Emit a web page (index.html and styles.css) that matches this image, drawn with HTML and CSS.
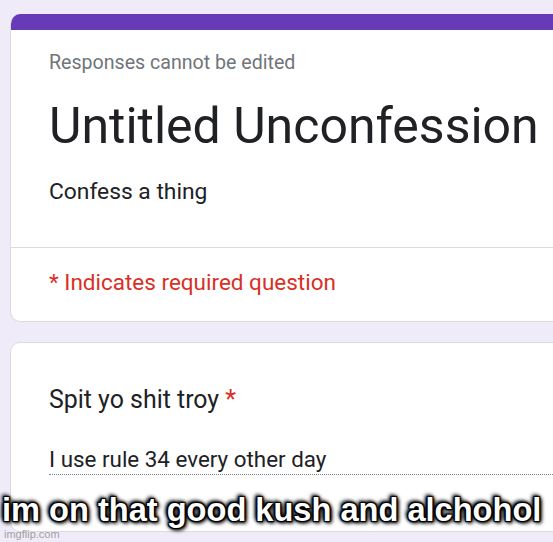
FILE: index.html
```html
<!DOCTYPE html>
<html>
<head>
<meta charset="utf-8">
<link rel="stylesheet" href="styles.css">
</head>
<body>
<div class="page">
  <div class="card head-card">
    <div class="bar"></div>
    <div class="head-body">
      <div class="note">Responses cannot be edited</div>
      <h1 class="title">Untitled Unconfession</h1>
      <div class="desc">Confess a thing</div>
    </div>
    <div class="req">* Indicates required question</div>
  </div>
  <div class="card q-card">
    <div class="q-title">Spit yo shit troy <span class="star">*</span></div>
    <div class="answer">I use rule 34 every other day</div>
  </div>
</div>
<div class="meme">im on that good kush and alchohol</div>
<div class="wm">imgflip.com</div>
</body>
</html>
```
FILE: styles.css
```css
html, body {
  margin: 0;
  padding: 0;
}
body {
  width: 553px;
  height: 542px;
  overflow: hidden;
  background: #f0ebf8;
  font-family: Roboto, "Noto Sans", sans-serif;
  position: relative;
}
.page {
  width: 553px;
  overflow: hidden;
  padding: 14px 0 0 10px;
  box-sizing: border-box;
  display: flex;
  flex-direction: column;
  gap: 20px;
}
.card {
  width: 640px;
  flex: none;
  background: #fff;
  border: 1px solid #dadce0;
  border-radius: 10px;
  box-sizing: border-box;
  overflow: hidden;
}
.head-card {
  border-top: none;
}
.bar {
  height: 16px;
  background: #673ab7;
}
.head-body {
  padding: 20px 0 0 38px;
  border-bottom: 1px solid #dadce0;
  height: 218px;
  box-sizing: border-box;
}
.note {
  font-size: 19.6px;
  color: #70757a;
  line-height: 26px;
}
.title {
  margin: 22px 0 0 0;
  font-weight: 400;
  font-size: 50px;
  line-height: 56px;
  color: #202124;
}
.desc {
  margin-top: 23px;
  font-size: 22.8px;
  line-height: 30px;
  color: #202124;
}
.req {
  padding: 19px 0 24px 38px;
  font-size: 22.5px;
  line-height: 30px;
  color: #d93025;
}
.q-card {
  height: 190px;
  padding: 41px 0 0 38px;
}
.q-title {
  font-size: 24.9px;
  line-height: 32px;
  color: #202124;
}
.star {
  color: #d93025;
}
.answer {
  margin-top: 28px;
  width: 560px;
  font-size: 22.4px;
  line-height: 30px;
  color: #202124;
  border-bottom: 1px dotted #80868b;
}
.meme {
  position: absolute;
  left: 2px;
  top: 490px;
  font-family: "Liberation Sans", Arial, sans-serif;
  font-weight: 700;
  font-size: 32.6px;
  line-height: 40px;
  color: #fff;
  white-space: nowrap;
  text-shadow: 1px 1px 1px #000, -1px -1px 1px #000, 1px -1px 1px #000, -1px 1px 1px #000, 0 0 3px #000, 0 0 4px #000, 0 0 5px #000, 2px 2px 4px #000, -2px -2px 4px #000;
}
.wm {
  position: absolute;
  left: 4px;
  top: 528px;
  font-family: "Liberation Sans", Arial, sans-serif;
  font-size: 11px;
  color: #a0a0a0;
  line-height: 13px;
}
```
